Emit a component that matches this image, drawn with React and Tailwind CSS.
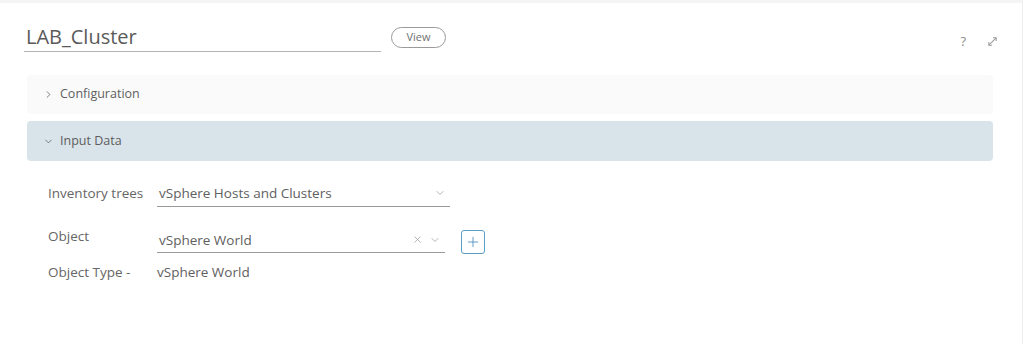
import { ChevronRight, ChevronDown, X, Plus } from "lucide-react";

function ExpandIcon() {
  return (
    <svg width="11" height="11" viewBox="0 0 12 12" fill="none" stroke="#9a9a9a" strokeWidth="1.1">
      <path d="M2 10 L10 2" />
      <path d="M6.5 2 H10 V5.5" />
      <path d="M2 6.5 V10 H5.5" />
    </svg>
  );
}

export default function App() {
  return (
    <div className="w-[1023px] h-[344px] bg-white border-t-[3px] border-[#f4f4f4] border-r border-r-[#eeeeee] font-['Open_Sans',sans-serif] text-[#5e5e5e] overflow-hidden">
      <div className="flex items-center pl-[24px] pr-[24px] pt-[22px]">
        <div className="w-[357px] border-b border-[#b3b3b3] pb-[1px]">
          <span className="text-[20px] leading-[24px] pl-[2px] text-[#5a5a5a]">LAB_Cluster</span>
        </div>
        <button className="ml-[10px] -mt-[3px] h-[21px] w-[55px] rounded-full border border-[#9a9a9a] text-[11px] leading-[18px] text-[#707070]">
          View
        </button>
        <div className="ml-auto flex items-center gap-[21px] pt-[6px]">
          <span className="text-[13px] text-[#8c8c8c]">?</span>
          <ExpandIcon />
        </div>
      </div>

      <div className="mx-[27px] mt-[23px] flex flex-col gap-[7px] w-[966px]">
        <div className="h-[39px] rounded-[4px] bg-[#fafafa] flex items-center pl-[16px] gap-[6px]">
          <ChevronRight size={11} strokeWidth={1.8} className="text-[#666]" />
          <span className="text-[12.5px] text-[#5e5e5e]">Configuration</span>
        </div>
        <div className="h-[40px] rounded-[4px] bg-[#d8e3ea] flex items-center pl-[16px] gap-[6px]">
          <ChevronDown size={11} strokeWidth={1.8} className="text-[#666]" />
          <span className="text-[12.5px] text-[#5e5e5e]">Input Data</span>
        </div>
      </div>

      <div className="pl-[48px] pt-[20px] text-[13.5px] flex flex-col">
        <div className="flex items-end h-[26px]">
          <span className="w-[109px] text-[#666] pb-[4px]">Inventory trees</span>
          <div className="w-[293px] flex items-center justify-between border-b border-[#9a9a9a] pb-[3px] pl-[2px] pr-[4px]">
            <span className="text-[#606060]">vSphere Hosts and Clusters</span>
            <ChevronDown size={12} strokeWidth={1.5} className="text-[#999]" />
          </div>
        </div>
        <div className="flex items-end h-[46px]">
          <span className="w-[109px] text-[#666] pb-[7px]">Object</span>
          <div className="w-[288px] flex items-center border-b border-[#9a9a9a] pb-[2px] pl-[2px] pr-[4px]">
            <span className="text-[#606060]">vSphere World</span>
            <X size={11} strokeWidth={1.5} className="ml-auto text-[#999]" />
            <ChevronDown size={12} strokeWidth={1.5} className="ml-[6px] text-[#999]" />
          </div>
          <button className="ml-[16px] mb-[-1px] w-[24px] h-[24px] rounded-[3px] border border-[#5a9fc7] flex items-center justify-center">
            <Plus size={16} strokeWidth={1.3} className="text-[#4b8ec0]" />
          </button>
        </div>
        <div className="flex items-center h-[34px] pt-[5px]">
          <span className="w-[109px] text-[#666]">Object Type -</span>
          <span className="text-[#606060]">vSphere World</span>
        </div>
      </div>
    </div>
  );
}
